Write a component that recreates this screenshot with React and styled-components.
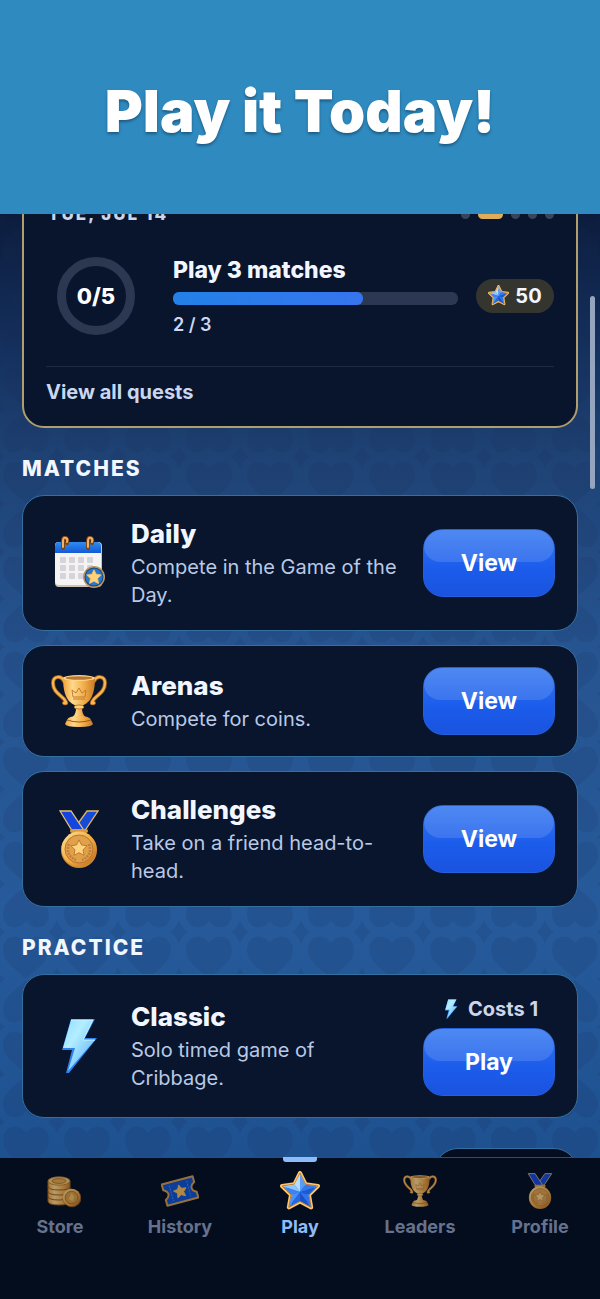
import React from 'react';
import styled, { createGlobalStyle } from 'styled-components';

const GlobalStyle = createGlobalStyle`
  * {
    box-sizing: border-box;
  }
  body {
    margin: 0;
    background: #040d1e;
    color: #f2f6ff;
    font-family: Inter, 'Liberation Sans', sans-serif;
  }
  h1, h2, h3, p {
    margin: 0;
  }
`;

const Page = styled.div`
  display: flex;
  flex-direction: column;
  height: 100vh;
  overflow: hidden;
`;

const Banner = styled.header`
  display: flex;
  flex: none;
  align-items: center;
  justify-content: center;
  height: 214px;
  padding-top: 8px;
  background: #2f8bbf;
`;

const BannerTitle = styled.h1`
  color: #fff;
  font-size: 58px;
  font-weight: 900;
  line-height: 68px;
  text-shadow: 0 2px 3px rgba(0, 30, 60, 0.45);
`;

const Main = styled.main`
  position: relative;
  flex: 1;
  min-height: 0;
  overflow: hidden;
  background: linear-gradient(to bottom, #0c1c3d 0, #14305c 130px, #1e4274 240px, #265490 430px, #265a9a 700px, #1e5190 100%);
`;

const Backdrop = styled.svg`
  position: absolute;
  inset: 0;
  width: 100%;
  height: 100%;
`;

const ScrollThumb = styled.div`
  position: absolute;
  top: 82px;
  right: 5px;
  width: 5px;
  height: 193px;
  border-radius: 3px;
  background: #96a5bf;
`;

const Content = styled.div`
  position: relative;
  display: flex;
  flex-direction: column;
  margin-top: -35px;
  padding: 0 22px;
`;

const QuestCard = styled.section`
  padding: 24px 22px 0;
  border: 2px solid #b09f6c;
  border-radius: 22px;
  background: #08152d;
`;

const QuestHeader = styled.div`
  display: flex;
  align-items: center;
  justify-content: space-between;
  height: 18px;
`;

const QuestDate = styled.h2`
  padding-left: 2px;
  color: #ccd6ea;
  font-size: 17px;
  font-weight: 800;
  letter-spacing: 2px;
`;

const Dots = styled.div`
  display: flex;
  gap: 8px;
`;

const Dot = styled.span`
  width: ${props => (props.$active ? '25px' : '9px')};
  height: 9px;
  border-radius: 5px;
  background: ${props => (props.$active ? '#dfac57' : '#39435a')};
`;

const QuestBody = styled.div`
  display: flex;
  align-items: center;
  padding: 32px 0 30px 11px;
`;

const RingWrap = styled.div`
  display: grid;
  flex: none;
  place-items: center;
  width: 78px;
  height: 78px;
  margin-right: 38px;
  border: 9px solid #2c3852;
  border-radius: 50%;
  color: #fff;
  font-size: 22px;
  font-weight: 800;
`;

const QuestInfo = styled.div`
  flex: 1;
`;

const QuestTitle = styled.h3`
  font-size: 23px;
  font-weight: 800;
  line-height: 30px;
`;

const QuestBar = styled.div`
  height: 13px;
  margin: 7px 0 9px;
  border-radius: 6px;
  background: #2c3852;
`;

const QuestFill = styled.div`
  height: 100%;
  border-radius: 6px;
  background: linear-gradient(to right, #2381e8, #3674ee);
`;

const QuestCount = styled.p`
  color: #cbd8ef;
  font-size: 18px;
  font-weight: 600;
  line-height: 22px;
`;

const Reward = styled.div`
  display: flex;
  flex: none;
  align-items: center;
  justify-content: center;
  gap: 6px;
  width: 78px;
  height: 34px;
  margin-left: 18px;
  border-radius: 17px;
  background: #35352f;
  font-size: 20px;
  font-weight: 700;
`;

const QuestLink = styled.a`
  display: block;
  padding: 11px 0 20px;
  border-top: 1px solid #1f2a43;
  color: #c9d7f0;
  font-size: 20px;
  font-weight: 700;
  line-height: 28px;
  text-decoration: none;
`;

const SectionTitle = styled.h2`
  margin: 27px 0 12px;
  font-size: 21px;
  font-weight: 800;
  line-height: 28px;
  letter-spacing: 2px;
`;

const CardList = styled.div`
  display: flex;
  flex-direction: column;
  gap: 14px;
`;

const Card = styled.article`
  display: flex;
  align-items: center;
  padding: 21px 22px 21px 28px;
  border: 1px solid #33709f;
  border-radius: 22px;
  background: #08152d;
`;

const CardIcon = styled.div`
  display: grid;
  flex: none;
  place-items: center;
  width: 56px;
  margin-right: 24px;
`;

const CardText = styled.div`
  flex: 1;
  padding-right: 24px;
`;

const CardTitle = styled.h3`
  padding-bottom: 2px;
  font-size: 26px;
  font-weight: 800;
  line-height: 34px;
`;

const CardDescription = styled.p`
  color: #b9c9e6;
  font-size: 20px;
  line-height: 28px;
`;

const CardAction = styled.div`
  display: flex;
  flex: none;
  flex-direction: column;
  gap: 6px;
`;

const Cost = styled.div`
  display: flex;
  align-items: center;
  justify-content: center;
  gap: 10px;
  padding-left: 4px;
  color: #ccd6ea;
  font-size: 20px;
  font-weight: 700;
  line-height: 26px;
`;

const GlossyButton = styled.button`
  width: 132px;
  height: 68px;
  padding: 0;
  border: 1px solid #2360dc;
  border-radius: 20px;
  background: linear-gradient(to bottom, #3478f0, #1c5dec 55%, #1a53df);
  color: #fff;
  font-family: inherit;
  font-size: 23px;
  font-weight: 700;
  position: relative;
  cursor: pointer;

  &::before {
    content: '';
    position: absolute;
    inset: 0 0 auto;
    height: 32px;
    border-radius: 18px;
    background: rgba(255, 255, 255, 0.13);
  }
`;

const NextCard = styled.div`
  align-self: flex-end;
  width: 144px;
  height: 60px;
  margin-top: 30px;
  border: 1px solid #33709f;
  border-radius: 24px;
  background: #050d20;
`;

const TabBar = styled.nav`
  display: grid;
  flex: none;
  grid-template-columns: repeat(5, 1fr);
  height: 142px;
  border-top: 1px solid #24507e;
  background: #040d1e;
`;

const Tab = styled.a`
  display: flex;
  position: relative;
  flex-direction: column;
  align-items: center;
  padding-top: 10px;
  color: ${props => (props.$active ? '#8ebcf8' : '#66728d')};
  font-size: 18px;
  font-weight: 700;
  line-height: 28px;
  text-decoration: none;

  &::before {
    content: '';
    display: ${props => (props.$active ? 'block' : 'none')};
    position: absolute;
    top: -1px;
    width: 34px;
    height: 5px;
    border-radius: 0 0 3px 3px;
    background: #8ebcf8;
  }

  svg {
    opacity: ${props => (props.$active ? 1 : 0.7)};
  }
`;

const TabIcon = styled.span`
  display: grid;
  place-items: center;
  height: 45px;
`;

const STAR = 'M20 2 L25.5 13.2 L38 15 L29 23.8 L31.2 36.4 L20 30.4 L8.8 36.4 L11 23.8 L2 15 L14.5 13.2 Z';

const Gradients = () => (
  <svg width="0" height="0" style={{ position: 'absolute' }} aria-hidden="true">
    <defs>
      <linearGradient id="gold" x1="0" y1="0" x2="1" y2="1">
        <stop offset="0" stopColor="#ffe29a" />
        <stop offset="0.5" stopColor="#f3ae46" />
        <stop offset="1" stopColor="#b9691c" />
      </linearGradient>
      <linearGradient id="cup" x1="0" y1="0" x2="1" y2="0">
        <stop offset="0" stopColor="#f0a13a" />
        <stop offset="0.3" stopColor="#ffd98a" />
        <stop offset="0.65" stopColor="#f2ae4b" />
        <stop offset="1" stopColor="#c97a20" />
      </linearGradient>
      <linearGradient id="azure" x1="0" y1="0" x2="0" y2="1">
        <stop offset="0" stopColor="#2d8df5" />
        <stop offset="1" stopColor="#1459d4" />
      </linearGradient>
      <linearGradient id="ice" x1="0" y1="0" x2="1" y2="1">
        <stop offset="0" stopColor="#8fdcff" />
        <stop offset="0.35" stopColor="#b4eeff" />
        <stop offset="1" stopColor="#4ba8fa" />
      </linearGradient>
    </defs>
  </svg>
);

const StarIcon = ({ size }) => (
  <svg width={size} height={size} viewBox="0 0 40 40">
    <path d={STAR} fill="#2767e3" stroke="#ffc66b" strokeWidth="4" strokeLinejoin="round" />
    <path d={STAR} fill="none" stroke="#c47a2c" strokeWidth="1" strokeLinejoin="round" />
    <path d="M20 3 L14.5 13.5 L20 21 Z" fill="#b5dcff" />
    <path d="M20 3 L25.5 13.5 L20 21 Z" fill="#5b9cf6" />
    <path d="M3 15.5 L14.5 13.5 L20 21 Z" fill="#8ac6ff" />
    <path d="M3 15.5 L11.5 24 L20 21 Z" fill="#3c83f0" />
    <path d="M9 36 L11.5 24 L20 21 Z" fill="#4a92f6" />
    <path d="M9 36 L20 30 L20 21 Z" fill="#2468e2" />
    <path d="M31 36 L20 30 L20 21 Z" fill="#1752c9" />
    <path d="M31 36 L28.5 24 L20 21 Z" fill="#2f74ec" />
    <path d="M37 15.5 L28.5 24 L20 21 Z" fill="#1b5ad5" />
    <path d="M37 15.5 L25.5 13.5 L20 21 Z" fill="#3578ec" />
  </svg>
);

const CalendarIcon = () => (
  <svg width="52" height="54" viewBox="-1 0 52 54">
    <rect x="1" y="6" width="47" height="45" rx="4" fill="#cfc3b5" />
    <rect x="1" y="6" width="46" height="43" rx="4" fill="#f6f4f2" />
    <path d="M1 17 V10 Q1 6 5 6 H43 Q47 6 47 10 V17 Z" fill="url(#azure)" />
    {[21, 29, 37].map(y =>
      [6, 15, 24, 33].map(x => <rect key={`${x}-${y}`} x={x} y={y} width="6" height="6" rx="1" fill="#d5d4dd" />)
    )}
    <path d="M9 12 V5 Q9 1 12 2 Q14 3 13 7 M34 12 V5 Q34 1 37 2 Q39 3 38 7" fill="none" stroke="#7c4314" strokeWidth="4" strokeLinecap="round" />
    <path d="M9 11 V5 Q9 1 12 2 Q14 3 13 6 M34 11 V5 Q34 1 37 2 Q39 3 38 6" fill="none" stroke="#efb268" strokeWidth="2" strokeLinecap="round" />
    <circle cx="40" cy="41" r="11" fill="#bd9664" />
    <circle cx="40" cy="41" r="9.5" fill="#17477e" />
    <circle cx="40" cy="41" r="8.5" fill="#2878cf" />
    <path d={STAR} transform="translate(32 33) scale(0.4)" fill="#ffd27a" stroke="#ffc45b" strokeWidth="2" strokeLinejoin="round" />
  </svg>
);

const TrophyIcon = ({ width, height }) => (
  <svg width={width} height={height} viewBox="0 0 56 54">
    <path d="M13 7 C10 1 2 2 2 9 C2 17 8 20 13 25 C16 29 16 30 13 29 M43 7 C46 1 54 2 54 9 C54 17 48 20 43 25 C40 29 40 30 43 29" fill="none" stroke="#9c5a18" strokeWidth="4" strokeLinecap="round" />
    <path d="M13 7 C10 1 2 2 2 9 C2 17 8 20 13 25 C16 29 16 30 13 29 M43 7 C46 1 54 2 54 9 C54 17 48 20 43 25 C40 29 40 30 43 29" fill="none" stroke="#f7b654" strokeWidth="2.4" strokeLinecap="round" />
    <path d="M24 30 H32 L31 36 Q32 42 36 44 H20 Q24 42 25 36 Z" fill="url(#cup)" />
    <path d="M12 4 H44 C44 19 40 31 28 32 C16 31 12 19 12 4 Z" fill="url(#cup)" />
    <ellipse cx="28" cy="4" rx="16" ry="3" fill="#ffd88c" />
    <ellipse cx="28" cy="4" rx="13.5" ry="1.8" fill="#b87630" />
    <ellipse cx="28" cy="33" rx="5" ry="2" fill="#ffd07a" stroke="#9c5a18" strokeWidth="0.7" />
    <path d="M16 46 Q17 42 28 42 Q39 42 40 46 L42 50 Q41 53 28 53 Q15 53 14 50 Z" fill="url(#cup)" />
    <path d="M16 46 Q28 50 40 46" fill="none" stroke="#9c5a18" strokeWidth="1" />
    <path d="M22 23 L21 16 L25 19 L28 14 L31 19 L35 16 L34 23 Z M22 25 H34" fill="none" stroke="#c07d30" strokeWidth="1" />
  </svg>
);

const MedalIcon = ({ width, height }) => (
  <svg width={width} height={height} viewBox="0 0 40 58">
    <path d="M39 1 H28 L15 19 L22 22 L27 19 Z" fill="#164bd8" stroke="#e2b369" strokeWidth="1.3" />
    <path d="M1 1 H12 L24 19 L18 22 L12 19 Z" fill="#1445df" stroke="#e8bd76" strokeWidth="1.3" />
    <rect x="11" y="19" width="18" height="4" rx="2" fill="#d99b42" />
    <circle cx="20" cy="40" r="18" fill="#d28a31" />
    <circle cx="20" cy="39" r="17.5" fill="url(#gold)" />
    <circle cx="20" cy="39" r="14" fill="#e1a04a" stroke="#b8752e" strokeWidth="1" />
    <path d="M10 34 Q6 45 17 50 M30 34 Q34 45 23 50" fill="none" stroke="#c07f38" strokeWidth="2.5" strokeDasharray="2 1" />
    <path d={STAR} transform="translate(11 29) scale(0.45)" fill="#ffd27c" stroke="#b87430" strokeWidth="2" strokeLinejoin="round" />
  </svg>
);

const BoltIcon = ({ width, height }) => (
  <svg width={width} height={height} viewBox="0 0 36 56">
    <path d="M10 1 H34 L24 20 H36 L8 55 L5 55 L11 32 H1 Z" fill="#2f82ee" strokeLinejoin="round" />
    <path d="M10 2 H32 L22 22 H34 L7 53 L14 30 H2 Z" fill="url(#ice)" />
    <path d="M10 2 H32 L22 22 H34" fill="none" stroke="#caf5ff" strokeWidth="1" />
  </svg>
);

const CoinsIcon = () => (
  <svg width="42" height="34" viewBox="-8 -2 42 34">
    {[23, 18, 13, 8].map(y => (
      <path key={y} d={`M1 ${y - 3} V${y + 2} Q1 ${y + 6} 12 ${y + 6} Q23 ${y + 6} 23 ${y + 2} V${y - 3} Z`} fill="url(#cup)" stroke="#9b601d" strokeWidth="1" />
    ))}
    <ellipse cx="12" cy="5" rx="11" ry="4.2" fill="#f5c56b" stroke="#b27426" strokeWidth="0.8" />
    <ellipse cx="12" cy="5" rx="7" ry="2.4" fill="#e4a748" stroke="#a66a22" strokeWidth="0.8" />
    <circle cx="25" cy="22" r="9.3" fill="#8d5216" />
    <circle cx="24.5" cy="21.5" r="8.8" fill="url(#gold)" />
    <circle cx="24.5" cy="21.5" r="6.3" fill="#dc9b42" stroke="#a2631d" strokeWidth="0.8" />
    <path d="M24.5 17 L27.5 21 L25.5 25 L21.5 23 Z" fill="#f2bb5b" />
  </svg>
);

const TicketIcon = () => (
  <svg width="38" height="32" viewBox="0 0 38 32">
    <g transform="rotate(-15 19 16)">
      <path d="M3 5 H35 V11 Q31 13 31 16 Q31 19 35 21 V27 H3 V21 Q7 19 7 16 Q7 13 3 11 Z" fill="#0f52cd" stroke="#d69a4a" strokeWidth="2" strokeLinejoin="round" />
      <path d="M10 8 V24 M28 8 V24" stroke="#4387e8" strokeWidth="1" strokeDasharray="2 1" />
      <path d={STAR} transform="translate(12 9) scale(0.36)" fill="#f8bd5a" stroke="#f8bd5a" strokeWidth="2" strokeLinejoin="round" />
    </g>
  </svg>
);

const HEART = 'M0 7 C6 -3 23 -2 23 14 C23 27 8 34 0 43 C-8 34 -23 27 -23 14 C-23 -2 -6 -3 0 7 Z';
const DIAMOND = 'M0 -12 Q3 -4 9 0 Q3 4 0 12 Q-3 4 -9 0 Q-3 -4 0 -12 Z';

const SuitBackdrop = () => (
  <Backdrop aria-hidden="true">
    <defs>
      <pattern id="suits" x="-4" y="57" width="61" height="95" patternUnits="userSpaceOnUse">
        <g fill="#142a55" fillOpacity="0.13">
          <path d={HEART} transform="translate(30 0)" />
          <path d={HEART} transform="translate(30 87) scale(1 -1)" />
          {[0, 61].map(x => [-4, 43, 91].map(y => (
            <path key={`${x}-${y}`} d={DIAMOND} transform={`translate(${x} ${y})`} />
          )))}
        </g>
      </pattern>
    </defs>
    <rect width="100%" height="100%" fill="url(#suits)" />
  </Backdrop>
);

const matches = [
  { title: 'Daily', text: 'Compete in the Game of the Day.', icon: <CalendarIcon /> },
  { title: 'Arenas', text: 'Compete for coins.', icon: <TrophyIcon width={56} height={54} /> },
  { title: 'Challenges', text: 'Take on a friend head-to-head.', icon: <MedalIcon width={40} height={58} /> },
];

const tabs = [
  { label: 'Store', icon: <CoinsIcon /> },
  { label: 'History', icon: <TicketIcon /> },
  { label: 'Play', icon: <StarIcon size={40} />, active: true },
  { label: 'Leaders', icon: <TrophyIcon width={34} height={34} /> },
  { label: 'Profile', icon: <MedalIcon width={26} height={36} /> },
];

const GameCard = ({ icon, title, text, action, cost }) => (
  <Card>
    <CardIcon>{icon}</CardIcon>
    <CardText>
      <CardTitle>{title}</CardTitle>
      <CardDescription>{text}</CardDescription>
    </CardText>
    <CardAction>
      {cost && <Cost><BoltIcon width={14} height={20} />{cost}</Cost>}
      <GlossyButton type="button">{action}</GlossyButton>
    </CardAction>
  </Card>
);

const Quests = ({ done, total }) => (
  <QuestCard>
    <QuestHeader>
      <QuestDate>TUE, JUL 14</QuestDate>
      <Dots>
        {[0, 1, 2, 3, 4].map(i => <Dot key={i} $active={i === 1} />)}
      </Dots>
    </QuestHeader>
    <QuestBody>
      <RingWrap>0/5</RingWrap>
      <QuestInfo>
        <QuestTitle>Play 3 matches</QuestTitle>
        <QuestBar>
          <QuestFill style={{ width: `${(done / total) * 100}%` }} />
        </QuestBar>
        <QuestCount>{done} / {total}</QuestCount>
      </QuestInfo>
      <Reward><StarIcon size={21} />50</Reward>
    </QuestBody>
    <QuestLink href="#quests">View all quests</QuestLink>
  </QuestCard>
);

const App = () => (
  <Page>
    <GlobalStyle />
    <Gradients />
    <Banner>
      <BannerTitle>Play it Today!</BannerTitle>
    </Banner>
    <Main>
      <SuitBackdrop />
      <Content>
        <Quests done={2} total={3} />
        <SectionTitle>MATCHES</SectionTitle>
        <CardList>
          {matches.map(match => <GameCard key={match.title} action="View" {...match} />)}
        </CardList>
        <SectionTitle>PRACTICE</SectionTitle>
        <GameCard icon={<BoltIcon width={36} height={56} />} title="Classic" text="Solo timed game of Cribbage." action="Play" cost="Costs 1" />
        <NextCard />
      </Content>
      <ScrollThumb />
    </Main>
    <TabBar>
      {tabs.map(tab => (
        <Tab key={tab.label} href={`#${tab.label.toLowerCase()}`} $active={tab.active}>
          <TabIcon>{tab.icon}</TabIcon>
          {tab.label}
        </Tab>
      ))}
    </TabBar>
  </Page>
);

export default App;
